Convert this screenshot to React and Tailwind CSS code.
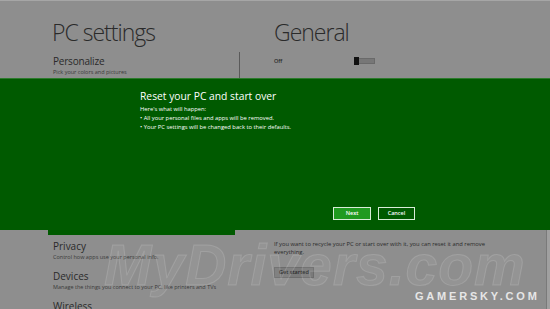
export default function App() {
  return (
    <div className="w-[550px] h-[309px] overflow-hidden relative bg-[#8e8e8e] text-[#2a2a2a] font-['Open_Sans',sans-serif] border-t border-[#a6a6a6]">
      {/* top: header + first item */}
      <div className="flex h-[77px]">
        <div className="w-[240px] flex flex-col">
          <h1 className="pl-[52px] pt-[16px] text-[23px] leading-[30px] font-light tracking-[-1px]">
            PC settings
          </h1>
          <div className="mt-auto h-[26px] border-r border-[#5a5a5a] pl-[53px] pt-[3px]">
            <div className="text-[10px] leading-[13px] tracking-[-0.2px]">Personalize</div>
            <div className="text-[5.5px] leading-[8px] text-[#3a3a3a]">Pick your colors and pictures</div>
          </div>
        </div>
        <div className="flex-1 pl-[34px]">
          <h1 className="pt-[16px] text-[23px] leading-[30px] font-light tracking-[-1px]">General</h1>
          <div className="flex items-center mt-[10px]">
            <span className="w-[80px] text-[5.5px] font-semibold">Off</span>
            <div className="flex items-center h-[8px]">
              <div className="w-[5px] h-[8px] bg-[#111]" />
              <div className="w-[16px] h-[6px] bg-[#777] border-y border-r border-[#6a6a6a]" />
            </div>
          </div>
        </div>
      </div>

      {/* reset dialog band */}
      <div className="h-[152px] bg-[#005a00] border-t border-[#2c7a2c] flex flex-col text-white">
        <div className="pl-[140px] pt-[10px]">
          <h2 className="text-[10.3px] leading-[14px]">Reset your PC and start over</h2>
          <div className="mt-[2px] text-[5.8px] leading-[9px]">
            <p>Here's what will happen:</p>
            <p>• All your personal files and apps will be removed.</p>
            <p>• Your PC settings will be changed back to their defaults.</p>
          </div>
        </div>
        <div className="mt-auto mb-[10px] pl-[333px] flex gap-[7px]">
          <button className="w-[38px] h-[13px] bg-[#1f9a1f] border border-[#d8ecd8] text-[5.5px] font-semibold leading-none">
            Next
          </button>
          <button className="w-[37px] h-[13px] border border-[#d8ecd8] text-[5.5px] font-semibold leading-none">
            Cancel
          </button>
        </div>
      </div>

      {/* bottom list */}
      <div className="flex">
        <div className="w-[240px]">
          <div className="ml-[48px] w-[187px] h-[5px] bg-[#005a00]" />
          <div className="pl-[53px] pt-[5px]">
            <div className="text-[10px] leading-[13px]">Privacy</div>
            <div className="text-[5.5px] leading-[8px] text-[#3a3a3a]">Control how apps use your personal info.</div>
            <div className="mt-[9px] text-[10px] leading-[13px]">Devices</div>
            <div className="text-[5.5px] leading-[8px] text-[#3a3a3a]">Manage the things you connect to your PC, like printers and TVs</div>
            <div className="mt-[9px] text-[10px] leading-[13px]">Wireless</div>
          </div>
        </div>
        <div className="flex-1 pl-[34px] pt-[10px]">
          <p className="w-[215px] text-[5.8px] leading-[8px] text-[#2a2a2a]">
            If you want to recycle your PC or start over with it, you can reset it and remove everything.
          </p>
          <button className="mt-[11px] h-[11px] px-[4px] bg-[#7a7a7a] border border-[#6c6c6c] text-[5.5px] font-semibold leading-none">
            Get started
          </button>
        </div>
      </div>

      {/* scrollbar edge */}
      <div className="absolute right-0 top-[229px] bottom-0 w-[4px] bg-[#a0a0a0] border-l border-[#7a7a7a]" />

      {/* watermarks */}
      <div className="absolute left-[104px] top-[236px] text-[57px] leading-none font-bold italic font-['Liberation_Sans',sans-serif] text-white/[0.06] [-webkit-text-stroke:1px_rgba(255,255,255,0.14)] tracking-[1px] pointer-events-none">
        MyDrivers.com
      </div>
      <div className="absolute left-[415px] top-[290px] text-[11px] leading-none font-bold font-['Liberation_Sans',sans-serif] text-[#e6e6e6] tracking-[2.8px]">
        GAMERSKY.COM
      </div>
    </div>
  );
}
